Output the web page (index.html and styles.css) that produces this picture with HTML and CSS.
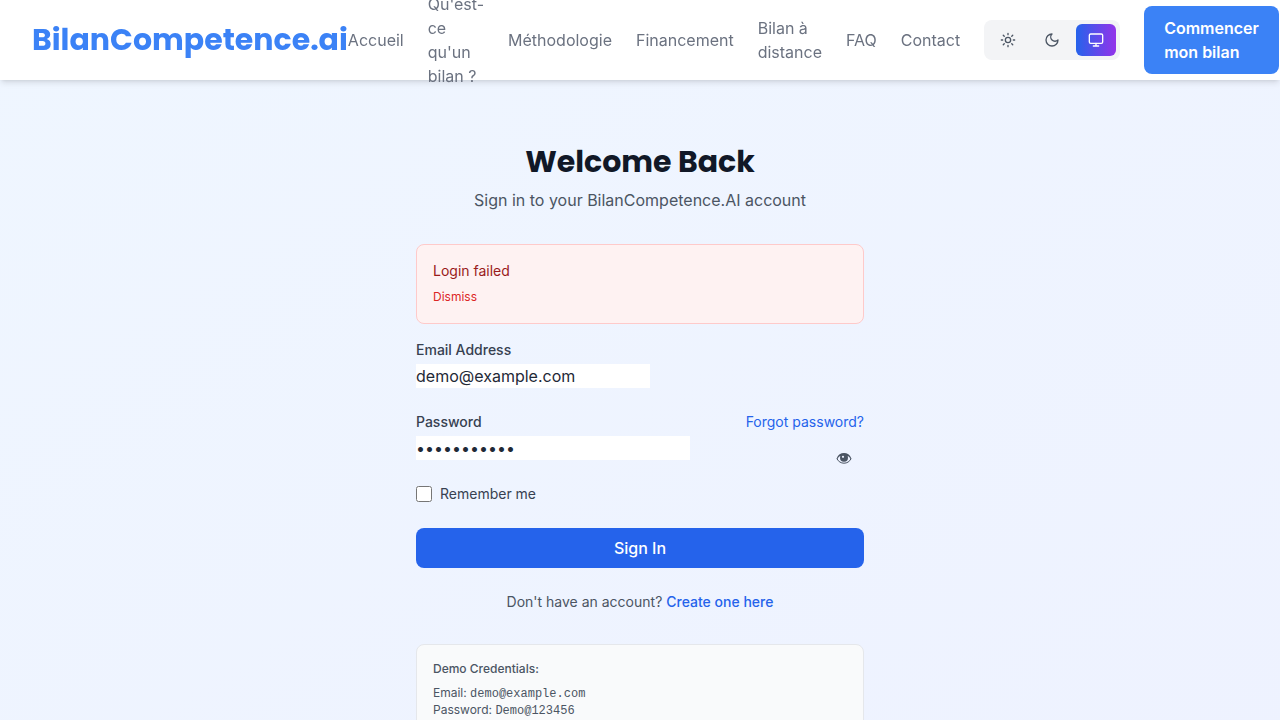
FILE: index.html
```html
<!DOCTYPE html>
<html lang="fr">
<head>
<meta charset="utf-8">
<meta name="viewport" content="width=device-width, initial-scale=1">
<title>BilanCompetence.ai</title>
<link rel="stylesheet" href="styles.css">
</head>
<body>
<header class="header">
  <a class="logo" href="#">BilanCompetence.ai</a>
  <nav class="nav">
    <a class="nav-link" href="#">Accueil</a>
    <a class="nav-link" href="#">Qu'est-ce qu'un bilan ?</a>
    <a class="nav-link" href="#">Méthodologie</a>
    <a class="nav-link" href="#">Financement</a>
    <a class="nav-link" href="#">Bilan à distance</a>
    <a class="nav-link" href="#">FAQ</a>
    <a class="nav-link" href="#">Contact</a>
    <div class="theme">
      <button class="theme-button" type="button" aria-label="Light">
        <svg class="icon" viewBox="0 0 24 24"><circle cx="12" cy="12" r="4"/><path d="M12 2v2M12 20v2M4.93 4.93l1.41 1.41M17.66 17.66l1.41 1.41M2 12h2M20 12h2M6.34 17.66l-1.41 1.41M19.07 4.93l-1.41 1.41"/></svg>
      </button>
      <button class="theme-button" type="button" aria-label="Dark">
        <svg class="icon" viewBox="0 0 24 24"><path d="M12 3a6 6 0 0 0 9 9 9 9 0 1 1-9-9Z"/></svg>
      </button>
      <button class="theme-button theme-active" type="button" aria-label="System">
        <svg class="icon" viewBox="0 0 24 24"><rect width="20" height="14" x="2" y="3" rx="2"/><path d="M8 21h8M12 17v4"/></svg>
      </button>
    </div>
    <a class="cta" href="#">Commencer mon bilan</a>
  </nav>
</header>
<main class="main">
  <div class="panel">
    <h1 class="title">Welcome Back</h1>
    <p class="subtitle">Sign in to your BilanCompetence.AI account</p>
    <form class="form">
      <div class="alert" role="alert">
        <p class="alert-text">Login failed</p>
        <button class="dismiss" type="button">Dismiss</button>
      </div>
      <div class="field">
        <label class="label" for="email">Email Address</label>
        <input class="input" id="email" type="email" value="demo@example.com">
      </div>
      <div class="field">
        <div class="label-row">
          <label class="label" for="password">Password</label>
          <a class="link" href="#">Forgot password?</a>
        </div>
        <div class="password">
          <input class="input input-password" id="password" type="password" value="Demo@123456">
          <button class="reveal" type="button" aria-label="Show password">
            <svg class="eye" viewBox="0 0 16 16"><path class="eye-white" d="M1 8.6C2.4 5.2 5 3.5 8 3.5s5.600 1.700 7 5.100C13.500 11.600 11 13.200 8 13.200S2.500 11.600 1 8.600Z"/><path class="eye-lid" d="M.6 8.400C2 4.800 4.800 3 8 3s6 1.800 7.400 5.400l-.5 1.400C14.200 8 13.200 6.700 12 5.900H4C2.800 6.700 1.800 8 1.100 9.800Z"/><path class="eye-line" d="M1 8.800c1.500 2.900 4 4.400 7 4.400s5.500-1.500 7-4.400"/><circle class="eye-lid" cx="8" cy="7.800" r="4"/><circle class="eye-white" cx="7" cy="6.800" r="1.100"/></svg>
          </button>
        </div>
      </div>
      <div class="remember">
        <input class="checkbox" id="remember" type="checkbox">
        <label for="remember">Remember me</label>
      </div>
      <button class="submit" type="button">Sign In</button>
    </form>
    <p class="signup">Don't have an account? <a class="link link-strong" href="#">Create one here</a></p>
    <div class="demo">
      <p class="demo-title">Demo Credentials:</p>
      <p>Email: <code class="code">demo@example.com</code></p>
      <p>Password: <code class="code">Demo@123456</code></p>
    </div>
  </div>
</main>
</body>
</html>
```
FILE: styles.css
```css
* { box-sizing: border-box; margin: 0; padding: 0; }

body {
  font-family: Inter, "Liberation Sans", sans-serif;
  font-size: 16px;
  line-height: 24px;
  color: #1f2937;
  overflow-x: hidden;
}

a { text-decoration: none; }

button, input { font: inherit; color: inherit; border: 0; }

button { background: none; cursor: pointer; }

.header {
  position: fixed;
  top: 0;
  left: 0;
  right: 0;
  z-index: 1;
  display: flex;
  align-items: center;
  justify-content: space-between;
  height: 80px;
  padding: 0 32px;
  background: #fff;
  box-shadow: 0 4px 6px -1px rgba(0, 0, 0, 0.1), 0 2px 4px -2px rgba(0, 0, 0, 0.1);
}

.logo {
  font-family: Poppins, Inter, sans-serif;
  font-size: 30px;
  line-height: 36px;
  font-weight: 700;
  color: #3b82f6;
}

.nav { display: flex; align-items: center; gap: 24px; }

.nav-link { color: #6b7280; }

.theme {
  display: flex;
  gap: 4px;
  padding: 4px;
  border-radius: 8px;
  background: #f3f4f6;
}

.theme-button {
  display: flex;
  padding: 8px 12px;
  border-radius: 6px;
  color: #4b5563;
}

.theme-active {
  color: #fff;
  background: linear-gradient(to right, #2563eb, #9333ea);
}

.icon {
  width: 16px;
  height: 16px;
  fill: none;
  stroke: currentColor;
  stroke-width: 2;
  stroke-linecap: round;
  stroke-linejoin: round;
}

.cta {
  padding: 10px 20px;
  border-radius: 8px;
  font-weight: 600;
  color: #fff;
  background: #3b82f6;
}

.main {
  display: flex;
  justify-content: center;
  min-height: 100vh;
  padding: 144px 16px 64px;
  background: linear-gradient(to bottom right, #eff6ff, #eef2ff);
}

.panel { width: 100%; max-width: 448px; }

.title {
  font-family: Poppins, Inter, sans-serif;
  font-size: 30px;
  line-height: 36px;
  font-weight: 700;
  text-align: center;
  color: #111827;
}

.subtitle { margin: 8px 0 32px; text-align: center; color: #4b5563; }

.form { display: flex; flex-direction: column; gap: 24px; }

.alert {
  margin-bottom: -8px;
  padding: 16px 16px 18px;
  border: 1px solid #fecaca;
  border-radius: 8px;
  background: #fef2f2;
}

.alert-text { font-size: 14px; line-height: 20px; color: #991b1b; }

.dismiss {
  display: block;
  margin-top: 8px;
  font-size: 12px;
  line-height: 16px;
  color: #dc2626;
}

.label {
  display: block;
  font-size: 14px;
  line-height: 20px;
  font-weight: 500;
  color: #374151;
}

.label-row { display: flex; justify-content: space-between; }

.field { display: flex; flex-direction: column; align-items: flex-start; gap: 4px; }

.label-row, .password { width: 100%; }

.input { display: block; width: 234px; height: 24px; background: #fff; }

.input-password { width: 274px; padding-right: 40px; }

.password { position: relative; }

.reveal { position: absolute; top: 14px; right: 12px; display: flex; color: #4b5563; }

.eye { width: 16px; height: 16px; }

.eye-white { fill: #eef2ff; }

.eye-lid { fill: currentColor; }

.eye-line { fill: none; stroke: currentColor; stroke-width: 1; }

.link { font-size: 14px; line-height: 20px; color: #2563eb; }

.link-strong { font-weight: 500; }

.remember {
  display: flex;
  align-items: center;
  gap: 8px;
  font-size: 14px;
  line-height: 20px;
  color: #374151;
}

.checkbox { width: 16px; height: 16px; }

.submit {
  padding: 8px 16px;
  border-radius: 8px;
  font-weight: 500;
  color: #fff;
  background: #2563eb;
}

.signup {
  margin: 24px 0 32px;
  font-size: 14px;
  line-height: 20px;
  text-align: center;
  color: #4b5563;
}

.demo {
  padding: 16px;
  border: 1px solid #e5e7eb;
  border-radius: 8px;
  background: #f9fafb;
  font-size: 12px;
  line-height: 16px;
  color: #4b5563;
}

.demo-title { margin-bottom: 8px; font-weight: 500; }

.code { font-family: "Liberation Mono", monospace; font-size: 12px; }
```
